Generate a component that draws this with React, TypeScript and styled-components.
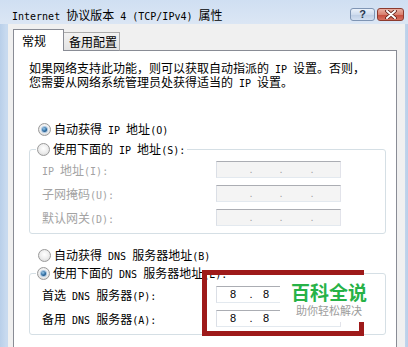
import React from 'react';
import styled, { createGlobalStyle } from 'styled-components';

const CJK = `"Noto Sans CJK SC", "Noto Sans", sans-serif`;

const Global = createGlobalStyle`
  html, body { margin: 0; padding: 0; }
  body { width: 408px; height: 347px; overflow: hidden; background: #c6d9ef; }
`;

const Window = styled.div`
  position: relative;
  width: 408px;
  height: 347px;
  overflow: hidden;
  display: flex;
  flex-direction: column;
  background: linear-gradient(90deg, #b9cfe9 0px, #c8daef 6px, #c8daef 402px, #b9cfe9 408px);
  font-family: ${CJK};
  font-size: 12px;
  color: #000;
`;

const TitleBar = styled.div`
  flex: none;
  height: 24px;
  display: flex;
  align-items: flex-start;
  padding: 0 4px 0 12px;
  background: linear-gradient(#cfdff2, #dbe6f4);
`;

const TitleText = styled.div`
  padding-top: 8px;
  line-height: 14px;
  white-space: nowrap;
`;

const M = styled.span`
  font-family: "DejaVu Sans Mono", "Liberation Mono", monospace;
  font-size: 10px;
  white-space: pre;
`;

const TitleButtons = styled.div`
  margin-left: auto;
  margin-top: 8px;
  display: flex;
  gap: 2px;
`;

const HelpButton = styled.div`
  width: 25px;
  height: 13px;
  box-sizing: border-box;
  border: 1px solid #7f95b4;
  border-radius: 3px;
  background: linear-gradient(#eaf1fa, #cfdcee 50%, #bccde4 51%, #d3e0f1);
  display: flex;
  align-items: center;
  justify-content: center;
  color: #27364f;
  font-family: "Liberation Sans", sans-serif;
  font-weight: 700;
  font-size: 11px;
  line-height: 11px;
`;

const CloseButton = styled.div`
  width: 27px;
  height: 13px;
  box-sizing: border-box;
  border: 1px solid #8c3b2f;
  border-radius: 3px;
  background: linear-gradient(#eab0a3, #d98170 50%, #c4493a 51%, #d57261);
  display: flex;
  align-items: center;
  justify-content: center;
`;

const Body = styled.div`
  flex: 1;
  min-height: 0;
  margin: 0 3px 0 8px;
  padding: 5px 8px 0 5px;
  background: #f0f0f0;
  display: flex;
  flex-direction: column;
`;

const Tabs = styled.div`
  position: relative;
  z-index: 1;
  height: 22px;
  margin-bottom: -1px;
  display: flex;
  align-items: flex-end;
`;

const Tab = styled.div<{ $active?: boolean }>`
  box-sizing: border-box;
  white-space: nowrap;
  line-height: 14px;
  ${p =>
    p.$active
      ? `
    width: 51px;
    height: 22px;
    padding: 4px 0 0 8px;
    background: #fff;
    border: 1px solid #898c95;
    border-bottom: none;
  `
      : `
    width: 56px;
    height: 19px;
    padding: 2px 0 0 5px;
    background: linear-gradient(#f2f2f2, #e3e3e3);
    border: 1px solid #acacac;
    border-left: none;
    border-bottom-color: #898c95;
  `}
`;

const Panel = styled.div`
  flex: 1;
  min-height: 0;
  background: #fff;
  border: 1px solid #898c95;
  border-bottom: none;
  display: flex;
  flex-direction: column;
  overflow: hidden;
`;

const Intro = styled.p`
  margin: 11px 0 0 15px;
  line-height: 12px;
  white-space: nowrap;
`;

const RadioRow = styled.div<{ $top: number }>`
  display: flex;
  align-items: center;
  gap: 3px;
  height: 13px;
  line-height: 13px;
  margin: ${p => p.$top}px 0 0 24px;
  white-space: nowrap;
`;

const Radio = styled.span<{ $on?: boolean }>`
  flex: none;
  width: 13px;
  height: 13px;
  box-sizing: border-box;
  border-radius: 50%;
  border: 1px solid #9a9a9a;
  background: radial-gradient(circle at 50% 40%, #ffffff 0%, #ececec 55%, #cfcfcf 100%);
  display: flex;
  align-items: center;
  justify-content: center;
  &::after {
    content: '';
    display: ${p => (p.$on ? 'block' : 'none')};
    width: 5px;
    height: 5px;
    border-radius: 50%;
    background: radial-gradient(circle at 40% 35%, #9cc9ea, #2a6aa0 55%, #0e3459);
    box-shadow: 0 0 0 1px #a9c6e2;
  }
`;

const Group = styled.fieldset<{ $top: number; $padTop: number }>`
  margin: ${p => p.$top}px 10px 0 15px;
  padding: ${p => p.$padTop}px 12px 7px 12px;
  border: 1px solid #d5dfe5;
  border-radius: 3px;
  min-width: 0;
  display: grid;
  grid-template-columns: 174px 125px;
  grid-auto-rows: 17px;
  row-gap: 7px;
  align-items: center;
`;

const Legend = styled.legend`
  display: flex;
  align-items: center;
  gap: 3px;
  height: 13px;
  line-height: 13px;
  padding: 0 2px 0 1px;
  margin-left: -6px;
  white-space: nowrap;
`;

const Label = styled.span<{ $disabled?: boolean }>`
  color: ${p => (p.$disabled ? '#a3a3a3' : '#000')};
  white-space: nowrap;
  line-height: 17px;
  padding-top: 2px;
`;

const IpBox = styled.div<{ $disabled?: boolean }>`
  width: 125px;
  height: 17px;
  box-sizing: border-box;
  border: 1px solid;
  border-color: #abadb3 #e2e3ea #e3e9ef #dbdfe6;
  background: ${p => (p.$disabled ? '#f4f4f4' : '#fff')};
  color: ${p => (p.$disabled ? '#a3a3a3' : '#000')};
  display: grid;
  grid-template-columns: 32px 4px 26px 4px 27px 4px 1fr;
  align-items: center;
  text-align: center;
  font-family: "Liberation Sans", sans-serif;
  font-size: 11px;
  line-height: 15px;
`;

const Annotation = styled.div`
  position: absolute;
  left: 202px;
  top: 270px;
  width: 162px;
  height: 66px;
  box-sizing: border-box;
  border: 5px solid #9e1a1a;
`;

const Watermark = styled.div`
  position: absolute;
  left: 280px;
  top: 275px;
  width: 98px;
  height: 47px;
  background: #fff;
  display: flex;
  flex-direction: column;
  align-items: center;
  padding-top: 7px;
  box-sizing: border-box;
`;

const WmTitle = styled.div`
  color: #27b247;
  font-size: 19px;
  font-weight: 700;
  line-height: 20px;
`;

const WmSub = styled.div`
  color: #9c9c9c;
  font-size: 11px;
  line-height: 14px;
  margin-top: 1px;
`;

const IpField: React.FC<{ values: string[]; disabled?: boolean }> = ({ values, disabled }) => (
  <IpBox $disabled={disabled}>
    <span>{values[0]}</span>
    <span>.</span>
    <span>{values[1]}</span>
    <span>.</span>
    <span>{values[2]}</span>
    <span>.</span>
    <span>{values[3]}</span>
  </IpBox>
);

export default function App() {
  return (
    <>
      <Global />
      <Window>
        <TitleBar>
          <TitleText>
            <M>Internet </M>协议版本<M> 4 (TCP/IPv4) </M>属性
          </TitleText>
          <TitleButtons>
            <HelpButton>?</HelpButton>
            <CloseButton>
              <svg width="12" height="9" viewBox="0 0 12 9">
                <path d="M2 1 L10 8 M10 1 L2 8" stroke="#5a1a12" strokeWidth="3.6" strokeLinecap="round" />
                <path d="M2 1 L10 8 M10 1 L2 8" stroke="#fff" strokeWidth="2" strokeLinecap="round" />
              </svg>
            </CloseButton>
          </TitleButtons>
        </TitleBar>
        <Body>
          <Tabs>
            <Tab $active>常规</Tab>
            <Tab>备用配置</Tab>
          </Tabs>
          <Panel>
            <Intro>
              如果网络支持此功能，则可以获取自动指派的<M> IP </M>设置。否则，
              <br />
              您需要从网络系统管理员处获得适当的<M> IP </M>设置。
            </Intro>
            <RadioRow $top={33}>
              <Radio $on />
              <span>
                自动获得<M> IP </M>地址<M>(O)</M>
              </span>
            </RadioRow>
            <Group $top={7} $padTop={5}>
              <Legend>
                <Radio />
                <span>
                  使用下面的<M> IP </M>地址<M>(S):</M>
                </span>
              </Legend>
              <Label $disabled>
                <M>IP </M>地址<M>(I):</M>
              </Label>
              <IpField values={['', '', '', '']} disabled />
              <Label $disabled>
                子网掩码<M>(U):</M>
              </Label>
              <IpField values={['', '', '', '']} disabled />
              <Label $disabled>
                默认网关<M>(D):</M>
              </Label>
              <IpField values={['', '', '', '']} disabled />
            </Group>
            <RadioRow $top={15}>
              <Radio />
              <span>
                自动获得<M> DNS </M>服务器地址<M>(B)</M>
              </span>
            </RadioRow>
            <Group $top={5} $padTop={6}>
              <Legend>
                <Radio $on />
                <span>
                  使用下面的<M> DNS </M>服务器地址<M>(E):</M>
                </span>
              </Legend>
              <Label>
                首选<M> DNS </M>服务器<M>(P):</M>
              </Label>
              <IpField values={['8', '8', '', '']} />
              <Label>
                备用<M> DNS </M>服务器<M>(A):</M>
              </Label>
              <IpField values={['8', '8', '', '']} />
            </Group>
          </Panel>
        </Body>
        <Annotation />
        <Watermark>
          <WmTitle>百科全说</WmTitle>
          <WmSub>助你轻松解决</WmSub>
        </Watermark>
      </Window>
    </>
  );
}
